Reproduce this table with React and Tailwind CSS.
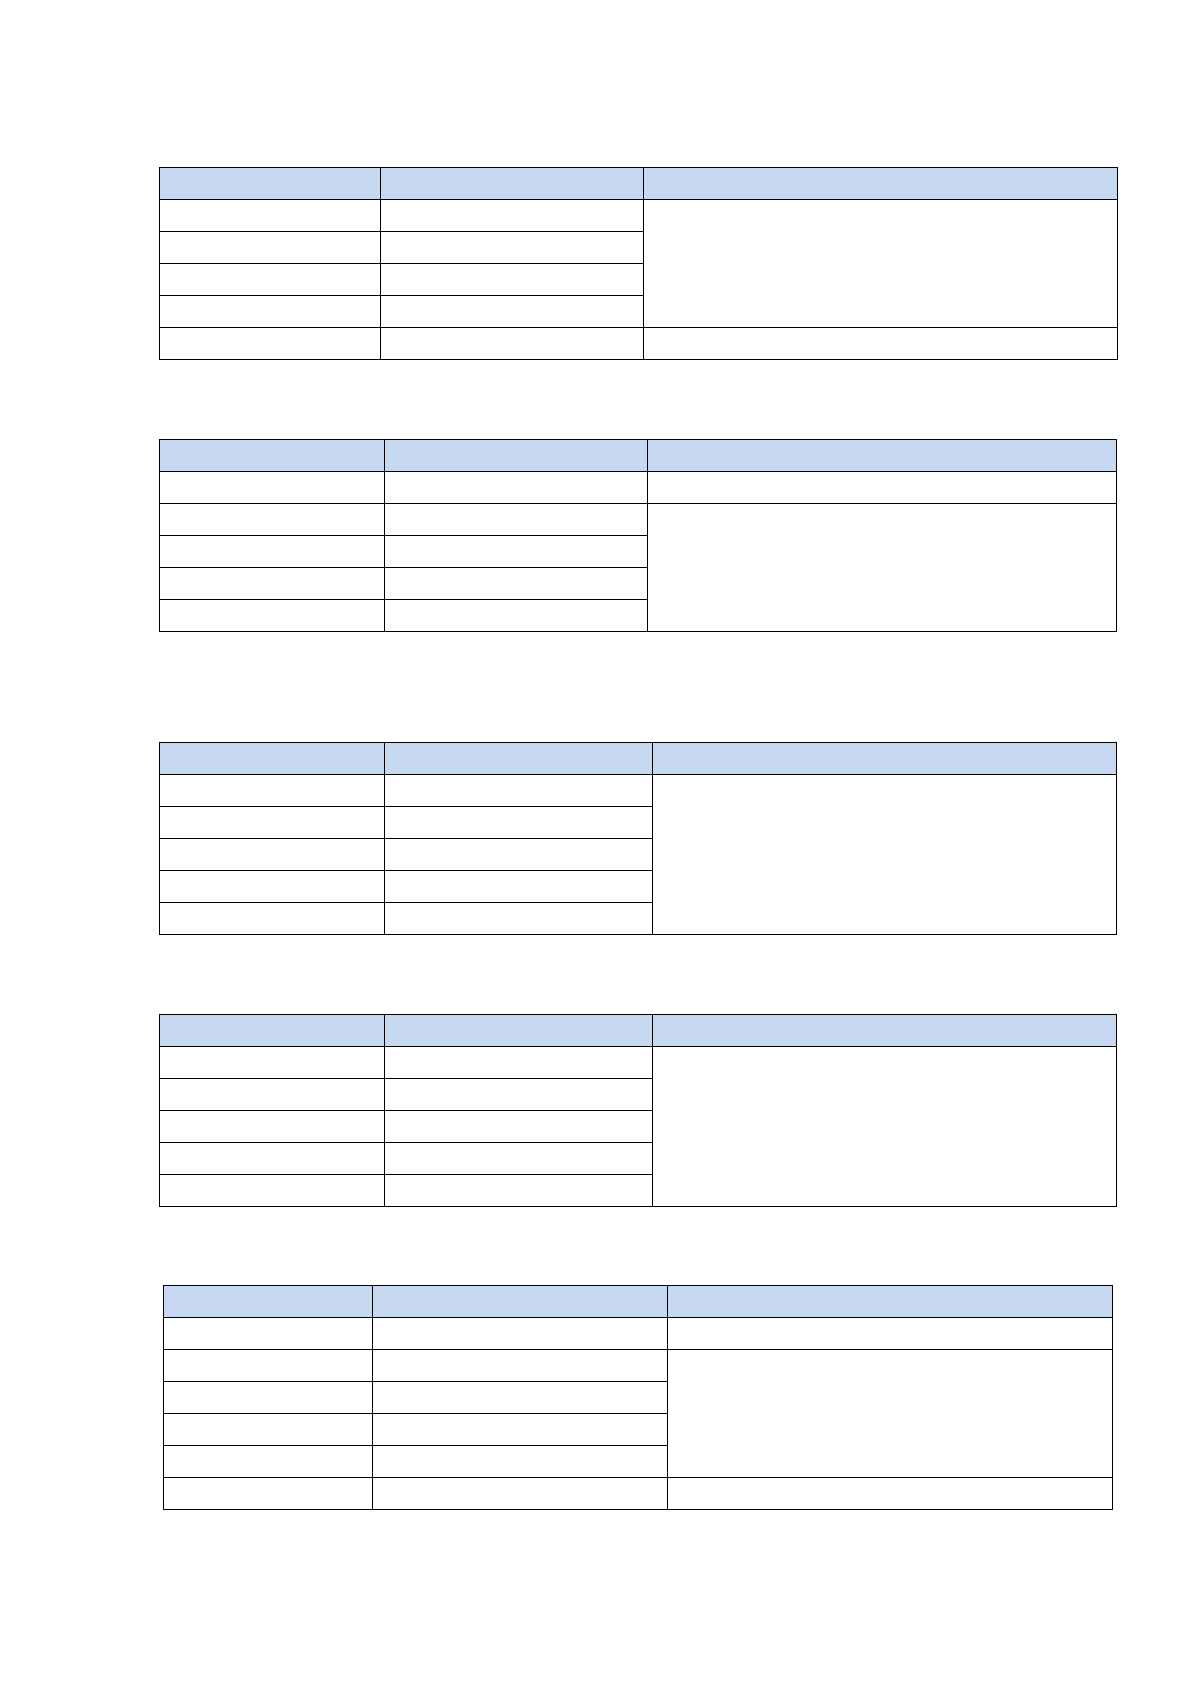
import React from 'react';

const tables = [
  { wrap: 'mt-[167px] ml-[159px]', cols: ['w-[221px]', 'w-[263px]', 'w-[474px]'], tw: 'w-[958px]', spans: [4, 1] },
  { wrap: 'mt-[79px] ml-[159px]', cols: ['w-[225px]', 'w-[263px]', 'w-[469px]'], tw: 'w-[957px]', spans: [1, 4] },
  { wrap: 'mt-[110px] ml-[159px]', cols: ['w-[225px]', 'w-[268px]', 'w-[464px]'], tw: 'w-[957px]', spans: [5] },
  { wrap: 'mt-[79px] ml-[159px]', cols: ['w-[225px]', 'w-[268px]', 'w-[464px]'], tw: 'w-[957px]', spans: [5] },
  { wrap: 'mt-[78px] ml-[163px]', cols: ['w-[209px]', 'w-[295px]', 'w-[445px]'], tw: 'w-[949px]', spans: [1, 4, 1] },
];

const cell = 'border border-black p-0 h-[32px]';

function EmptyTable({ t }) {
  const rowCount = t.spans.reduce((a, b) => a + b, 0);
  // rows that start a new cell in the third column
  const starts = {};
  let r = 0;
  t.spans.forEach((s) => {
    starts[r] = s;
    r += s;
  });

  return (
    <div className={t.wrap}>
      <table className={`border-collapse table-fixed ${t.tw}`}>
        <colgroup>
          {t.cols.map((c, i) => (
            <col key={i} className={c} />
          ))}
        </colgroup>
        <thead>
          <tr>
            <th className={`${cell} bg-[#c6d9f1]`}></th>
            <th className={`${cell} bg-[#c6d9f1]`}></th>
            <th className={`${cell} bg-[#c6d9f1]`}></th>
          </tr>
        </thead>
        <tbody>
          {Array.from({ length: rowCount }).map((_, i) => (
            <tr key={i}>
              <td className={cell}></td>
              <td className={cell}></td>
              {starts[i] !== undefined && <td rowSpan={starts[i]} className={cell}></td>}
            </tr>
          ))}
        </tbody>
      </table>
    </div>
  );
}

export default function App() {
  return (
    <div className="w-[1190px] h-[1684px] bg-white overflow-hidden pt-px -mt-px" style={{ fontFamily: '"Liberation Sans", Arial, sans-serif' }}>
      {tables.map((t, i) => (
        <EmptyTable key={i} t={t} />
      ))}
    </div>
  );
}
